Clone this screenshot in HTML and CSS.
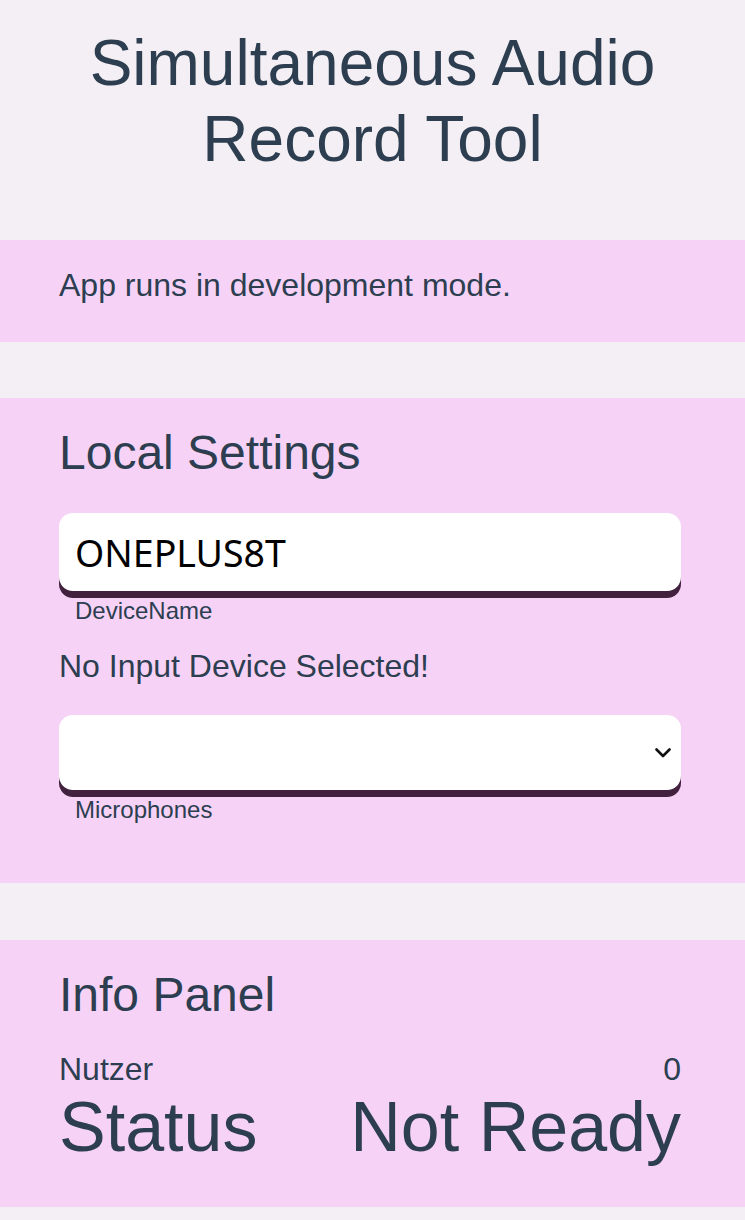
FILE: index.html
```html
<!DOCTYPE html>
<html lang="en">
<head>
<meta charset="utf-8">
<title>Simultaneous Audio Record Tool</title>
<link rel="stylesheet" href="styles.css">
</head>
<body>
<div class="app">
  <header class="title-block">
    <h1 class="title">Simultaneous Audio<br>Record Tool</h1>
  </header>

  <section class="panel panel-notice">
    <p class="notice-text">App runs in development mode.</p>
  </section>

  <section class="panel panel-settings">
    <h2 class="panel-title">Local Settings</h2>
    <div class="field field-name">
      <input class="text-input" type="text" value="ONEPLUS8T">
      <label class="field-label">DeviceName</label>
    </div>
    <p class="warning">No Input Device Selected!</p>
    <div class="field field-mic">
      <div class="select-wrap">
        <select class="select-input"><option></option></select>
        <svg class="chevron" width="16" height="10" viewBox="0 0 16 10" aria-hidden="true">
          <path d="M1.5 1.5 L8 8 L14.5 1.5" fill="none" stroke="#111" stroke-width="2.6" stroke-linecap="round" stroke-linejoin="round"/>
        </svg>
      </div>
      <label class="field-label">Microphones</label>
    </div>
  </section>

  <section class="panel panel-info">
    <h2 class="panel-title">Info Panel</h2>
    <div class="info-row small">
      <span>Nutzer</span>
      <span>0</span>
    </div>
    <div class="info-row big">
      <span>Status</span>
      <span>Not Ready</span>
    </div>
  </section>
</div>
</body>
</html>
```

FILE: styles.css
```css
html, body {
  margin: 0;
  padding: 0;
}

body {
  background: #f4eff4;
  color: #2c3e50;
  font-family: "Liberation Sans", Arial, sans-serif;
}

.app {
  display: flex;
  flex-direction: column;
  padding-bottom: 13px;
}

.title-block {
  padding-top: 25px;
  margin-bottom: 63px;
}

.title {
  margin: 0;
  text-align: center;
  font-weight: 400;
  font-size: 64px;
  line-height: 76px;
}

.panel {
  background: #f6d3f6;
  padding-left: 59px;
  padding-right: 64px;
}

.panel-notice {
  padding-top: 27px;
  padding-bottom: 38px;
}

.notice-text {
  margin: 0;
  font-size: 32px;
  line-height: 37px;
}

.panel-settings {
  margin-top: 56px;
  padding-top: 27px;
  padding-bottom: 59px;
}

.panel-info {
  margin-top: 57px;
  padding-top: 27px;
  padding-bottom: 40px;
}

.panel-title {
  margin: 0;
  font-weight: 400;
  font-size: 48px;
  line-height: 56px;
}

.field {
  display: flex;
  flex-direction: column;
}

.field-name {
  margin-top: 32px;
}

.field-mic {
  margin-top: 30px;
}

.text-input,
.select-input {
  box-sizing: border-box;
  width: 100%;
  margin: 0;
  border: none;
  outline: none;
  background: #ffffff;
  border-radius: 14px;
  box-shadow: 0 7px 0 #42213f;
  color: #000000;
}

.text-input {
  height: 78px;
  padding: 0 15px 0 16px;
  font-family: "Noto Sans", "Open Sans", sans-serif;
  font-size: 37.5px;
}

.select-wrap {
  position: relative;
}

.select-input {
  display: block;
  height: 75px;
  -webkit-appearance: none;
  appearance: none;
  font-family: "Noto Sans", sans-serif;
  font-size: 32px;
  padding: 0 40px 0 16px;
}

.chevron {
  position: absolute;
  right: 10px;
  top: 33px;
  pointer-events: none;
}

.field-label {
  margin-top: 6px;
  padding-left: 16px;
  font-size: 24px;
  line-height: 28px;
}

.warning {
  margin: 23px 0 0;
  font-size: 32px;
  line-height: 37px;
}

.info-row {
  display: flex;
  justify-content: space-between;
  align-items: baseline;
}

.info-row.small {
  margin-top: 29px;
  font-size: 32px;
  line-height: 35px;
}

.info-row.big {
  font-size: 70px;
  line-height: 80px;
}
```
